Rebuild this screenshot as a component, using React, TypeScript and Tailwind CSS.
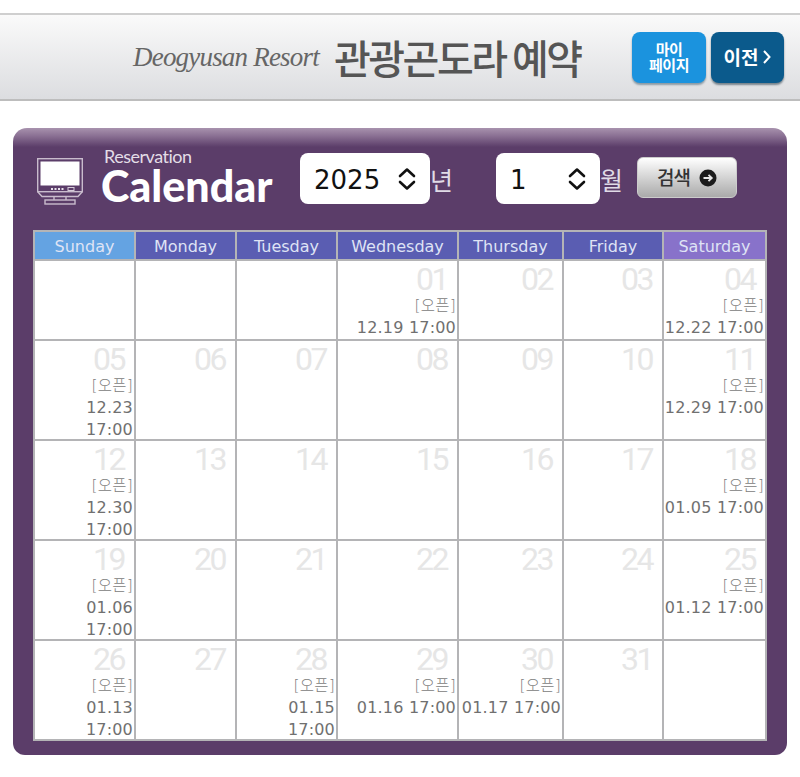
import React from 'react';

type Day = { num?: string; open?: string[] };

const weekDays = [
  { name: 'Sunday', color: 'bg-[#64a3e2]' },
  { name: 'Monday', color: 'bg-[#5a5db2]' },
  { name: 'Tuesday', color: 'bg-[#5a5db2]' },
  { name: 'Wednesday', color: 'bg-[#5a5db2]' },
  { name: 'Thursday', color: 'bg-[#5a5db2]' },
  { name: 'Friday', color: 'bg-[#5a5db2]' },
  { name: 'Saturday', color: 'bg-[#8872ca]' },
];

const weeks: { height: string; days: Day[] }[] = [
  {
    height: 'h-[78px]',
    days: [
      {},
      {},
      {},
      { num: '01', open: ['12.19 17:00'] },
      { num: '02' },
      { num: '03' },
      { num: '04', open: ['12.22 17:00'] },
    ],
  },
  {
    height: 'h-[98px]',
    days: [
      { num: '05', open: ['12.23', '17:00'] },
      { num: '06' },
      { num: '07' },
      { num: '08' },
      { num: '09' },
      { num: '10' },
      { num: '11', open: ['12.29 17:00'] },
    ],
  },
  {
    height: 'h-[98px]',
    days: [
      { num: '12', open: ['12.30', '17:00'] },
      { num: '13' },
      { num: '14' },
      { num: '15' },
      { num: '16' },
      { num: '17' },
      { num: '18', open: ['01.05 17:00'] },
    ],
  },
  {
    height: 'h-[98px]',
    days: [
      { num: '19', open: ['01.06', '17:00'] },
      { num: '20' },
      { num: '21' },
      { num: '22' },
      { num: '23' },
      { num: '24' },
      { num: '25', open: ['01.12 17:00'] },
    ],
  },
  {
    height: 'h-[98px]',
    days: [
      { num: '26', open: ['01.13', '17:00'] },
      { num: '27' },
      { num: '28', open: ['01.15', '17:00'] },
      { num: '29', open: ['01.16 17:00'] },
      { num: '30', open: ['01.17 17:00'] },
      { num: '31' },
      {},
    ],
  },
];

const Chevrons = () => (
  <svg width="20" height="26" viewBox="0 0 20 26" fill="none" stroke="#111" strokeWidth="2.6" strokeLinecap="round" strokeLinejoin="round">
    <path d="M3 10 L10 3.5 L17 10" />
    <path d="M3 16 L10 22.5 L17 16" />
  </svg>
);

const MonitorIcon = () => (
  <svg width="46" height="47" viewBox="0 0 46 47" fill="none">
    <rect x="0.7" y="0.7" width="44.6" height="33" stroke="#c9bccd" strokeWidth="1.4" />
    <rect x="3.5" y="3.5" width="39" height="24" fill="#fff" />
    <path d="M0.7 33.7 L5 38.5 H41 L45.3 33.7" stroke="#c9bccd" strokeWidth="1.4" />
    <path d="M14 31 H27" stroke="#e8e2ea" strokeWidth="2" strokeDasharray="2 1.5" />
    <rect x="31" y="29.5" width="6" height="3" stroke="#d5cbd9" strokeWidth="1" />
    <path d="M17 38.5 V42 M29 38.5 V42" stroke="#c9bccd" strokeWidth="1.4" />
    <rect x="8" y="42" width="30" height="4" stroke="#c9bccd" strokeWidth="1.4" />
  </svg>
);

const ArrowCircle = () => (
  <svg width="18" height="18" viewBox="0 0 18 18">
    <circle cx="9" cy="9" r="8.5" fill="#1c1c1c" />
    <path d="M4.5 9 H12.5 M9.5 5.8 L12.8 9 L9.5 12.2" fill="none" stroke="#e8e8e8" strokeWidth="1.8" />
  </svg>
);

const SelectBox: React.FC<{ value: string; options: string[]; className: string; chevron: string }> = ({ value, options, className, chevron }) => (
  <div className={`relative h-[51px] rounded-lg bg-white ${className}`}>
    <select
      defaultValue={value}
      className="h-full w-full appearance-none bg-transparent pl-[14px] pt-[4px] text-[26px] text-[#111] outline-none font-['DejaVu_Sans',sans-serif]"
    >
      {options.map(o => (
        <option key={o} value={o}>{o}</option>
      ))}
    </select>
    <span className={`pointer-events-none absolute top-[13px] ${chevron}`}>
      <Chevrons />
    </span>
  </div>
);

const DayCell: React.FC<{ day: Day; height: string }> = ({ day, height }) => (
  <div className={`bg-white pr-[1px] text-right ${height}`}>
    {day.num && (
      <div className="h-[34px] pr-[9px] pt-[1px] text-[32px] leading-[34px] text-[#e6e6e6] font-['Roboto',sans-serif] font-normal tracking-[-2.5px]">
        {day.num}
      </div>
    )}
    {day.open && (
      <div className="text-[16px] leading-[22px] tracking-[0.2px] text-[#707070] font-['DejaVu_Sans','Noto_Sans_CJK_KR',sans-serif] whitespace-nowrap">
        <div className="text-[15.5px] font-light text-[#808080]">[오픈]</div>
        {day.open.map(line => (
          <div key={line}>{line}</div>
        ))}
      </div>
    )}
  </div>
);

export default function App() {
  return (
    <div className="h-[777px] w-[800px] overflow-hidden bg-white">
      {/* top bar */}
      <header className="mt-[13px] flex h-[88px] items-center border-y-2 border-t-[#cfcfcf] border-b-[#bdbdbd] bg-gradient-to-b from-[#fafafa] to-[#dcdde0] pl-[133px]">
        <span className="w-[187px] whitespace-nowrap text-[27px] italic tracking-[-0.8px] text-[#666] font-['Liberation_Serif',serif]">
          Deogyusan Resort
        </span>
        <h1 className="ml-[14px] w-[298px] whitespace-nowrap text-[40px] font-medium tracking-[-2.5px] text-[#555] font-['Noto_Sans_CJK_KR',sans-serif]">
          관광곤도라 예약
        </h1>
        <a className="flex h-[51px] w-[74px] items-center justify-center rounded-lg bg-[#1b93de] text-center text-[15px] font-bold leading-[16px] tracking-[-0.5px] text-white shadow-[0_2px_2px_#8a9aa5] font-['Noto_Sans_CJK_KR',sans-serif]">
          마이<br />페이지
        </a>
        <a className="ml-[5px] flex h-[51px] w-[73px] items-center justify-center gap-[5px] rounded-lg bg-[#0b5a8c] text-[19px] font-bold text-white shadow-[0_2px_2px_#77838c] font-['Noto_Sans_CJK_KR',sans-serif]">
          이전
          <svg width="8" height="14" viewBox="0 0 8 14" fill="none" stroke="#fff" strokeWidth="2">
            <path d="M1 1 L6.5 7 L1 13" />
          </svg>
        </a>
      </header>

      {/* calendar panel */}
      <section className="ml-[13px] mt-[27px] h-[627px] w-[774px] rounded-t-[14px] rounded-b-[12px] bg-[linear-gradient(to_bottom,#a892ae_0px,#8a7093_8px,#5b3d69_19px)] px-[20px] pt-[18px]">
        <div className="flex h-[84px] items-start">
          <div className="ml-[4px] mt-[12px]">
            <MonitorIcon />
          </div>
          <div className="ml-[18px] w-[199px]">
            <div className="pl-[3px] text-[18px] leading-[20px] tracking-[-0.5px] text-[#e4dde7] font-['Lato',sans-serif]">Reservation</div>
            <div className="text-[43px] font-black leading-[40px] tracking-[0px] text-white font-['Lato',sans-serif] whitespace-nowrap">Calendar</div>
          </div>
          <div className="mt-[7px] flex items-start">
            <SelectBox value="2025" options={['2024', '2025', '2026']} className="w-[130px]" chevron="left-[97px]" />
            <span className="mt-[8px] w-[66px] text-[25px] text-[#e0dbe6] font-['Noto_Sans_CJK_KR',sans-serif] font-normal">년</span>
            <SelectBox value="1" options={['1', '2', '3', '4', '5', '6', '7', '8', '9', '10', '11', '12']} className="w-[104px]" chevron="left-[71px]" />
            <span className="mt-[8px] w-[37px] text-[25px] text-[#e0dbe6] font-['Noto_Sans_CJK_KR',sans-serif] font-normal">월</span>
            <button className="mt-[4px] flex h-[41px] w-[100px] items-center justify-center gap-[9px] rounded-md border border-[#ccc] bg-gradient-to-b from-white to-[#aaa] text-[19px] font-medium tracking-[-1px] text-[#333] font-['Noto_Sans_CJK_KR',sans-serif]">
              검색 <ArrowCircle />
            </button>
          </div>
        </div>

        <div className="grid grid-cols-[99px_99px_99px_119px_103px_98px_101px] gap-[2px] bg-[#b4b4b6] p-[2px]">
          {weekDays.map(d => (
            <div
              key={d.name}
              className={`h-[27px] text-center text-[16px] leading-[30px] text-[#dfe3f5] font-['DejaVu_Sans',sans-serif] ${d.color}`}
            >
              {d.name}
            </div>
          ))}
          {weeks.map(week =>
            week.days.map((day, i) => (
              <DayCell key={`${week.days[0].num}-${i}`} day={day} height={week.height} />
            ))
          )}
        </div>
      </section>
    </div>
  );
}
